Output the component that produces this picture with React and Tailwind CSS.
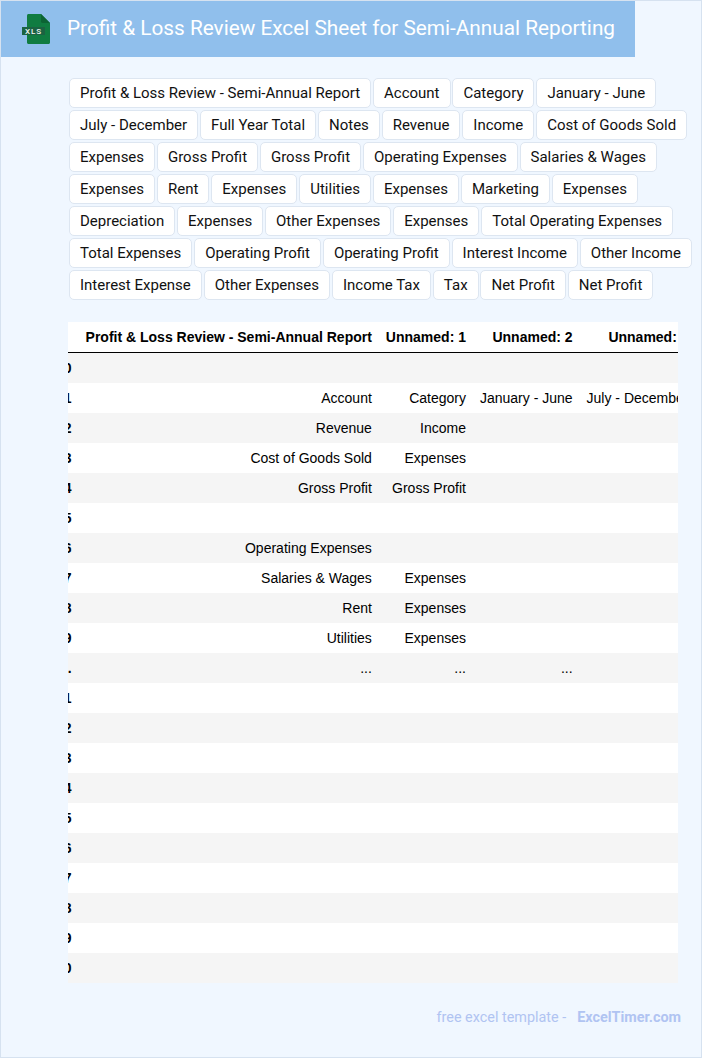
const tags = [
  "Profit & Loss Review - Semi-Annual Report", "Account", "Category", "January - June",
  "July - December", "Full Year Total", "Notes", "Revenue", "Income", "Cost of Goods Sold",
  "Expenses", "Gross Profit", "Gross Profit", "Operating Expenses", "Salaries & Wages",
  "Expenses", "Rent", "Expenses", "Utilities", "Expenses", "Marketing", "Expenses",
  "Depreciation", "Expenses", "Other Expenses", "Expenses", "Total Operating Expenses",
  "Total Expenses", "Operating Profit", "Operating Profit", "Interest Income", "Other Income",
  "Interest Expense", "Other Expenses", "Income Tax", "Tax", "Net Profit", "Net Profit",
];

const rows = [
  ["0", "", "", "", ""],
  ["1", "Account", "Category", "January - June", "July - December"],
  ["2", "Revenue", "Income", "", ""],
  ["3", "Cost of Goods Sold", "Expenses", "", ""],
  ["4", "Gross Profit", "Gross Profit", "", ""],
  ["5", "", "", "", ""],
  ["6", "Operating Expenses", "", "", ""],
  ["7", "Salaries & Wages", "Expenses", "", ""],
  ["8", "Rent", "Expenses", "", ""],
  ["9", "Utilities", "Expenses", "", ""],
  ["...", "...", "...", "...", ""],
  ["11", "", "", "", ""],
  ["12", "", "", "", ""],
  ["13", "", "", "", ""],
  ["14", "", "", "", ""],
  ["15", "", "", "", ""],
  ["16", "", "", "", ""],
  ["17", "", "", "", ""],
  ["18", "", "", "", ""],
  ["19", "", "", "", ""],
  ["20", "", "", "", ""],
];

function XlsIcon() {
  return (
    <svg width="28" height="30" viewBox="0 0 28 30" className="shrink-0">
      <path d="M5 1.5C5 0.7 5.7 0 6.5 0H19L28 9V28.5C28 29.3 27.3 30 26.5 30H6.5C5.7 30 5 29.3 5 28.5Z" fill="#107c41" />
      <path d="M19 0L28 9H20.5C19.7 9 19 8.3 19 7.5Z" fill="#0c6434" />
      <rect x="0" y="13" width="23" height="8" fill="#1b6342" />
      <text x="11.5" y="20" textAnchor="middle" fill="#f2f7f4" fontSize="8" fontWeight="500" letterSpacing="1" fontFamily="Roboto, sans-serif">XLS</text>
    </svg>
  );
}

export default function App() {
  return (
    <div className="h-[1058px] w-[702px] overflow-hidden border border-[#d6e2f0] bg-[#f0f7ff] font-['Roboto',sans-serif]">
      <div className="flex h-14 w-[634px] items-center gap-[17px] bg-[#90bfec] pl-[21px]">
        <XlsIcon />
        <h1 className="whitespace-nowrap text-[20.77px] font-normal text-white">
          Profit & Loss Review Excel Sheet for Semi-Annual Reporting
        </h1>
      </div>

      <div className="mt-[21px] flex flex-wrap gap-x-[1.9px] gap-y-[2px] pl-[68px]">
        {tags.map((tag, i) => (
          <span
            key={i}
            className="h-[30px] rounded-[5px] border border-[#dde6f1] bg-white px-[10px] text-[15px] leading-[28px] whitespace-nowrap text-[#111]"
          >
            {tag}
          </span>
        ))}
      </div>

      <div className="mt-[22px] ml-[67px] w-[610px] overflow-hidden font-['Liberation_Sans',sans-serif] text-[14px] text-black">
        <table className="-ml-[19px] border-separate border-spacing-0 whitespace-nowrap">
          <thead>
            <tr className="h-[31px] bg-white">
              <th className="w-[30px] border-b border-black px-[7px]"></th>
              <th className="border-b border-black px-[7px] text-right font-bold">Profit & Loss Review - Semi-Annual Report</th>
              <th className="border-b border-black px-[7px] text-right font-bold">Unnamed: 1</th>
              <th className="border-b border-black px-[7px] text-right font-bold">Unnamed: 2</th>
              <th className="border-b border-black px-[7px] text-right font-bold">Unnamed: 3</th>
            </tr>
          </thead>
          <tbody>
            {rows.map((row, i) => (
              <tr key={i} className={i % 2 === 0 ? "h-[30px] bg-[#f5f5f5]" : "h-[30px] bg-white"}>
                <th className="px-[7px] text-right font-bold">{row[0]}</th>
                <td className="px-[7px] text-right">{row[1]}</td>
                <td className="px-[7px] text-right">{row[2]}</td>
                <td className="px-[7px] text-right">{row[3]}</td>
                <td className="px-[7px] text-right">{row[4]}</td>
              </tr>
            ))}
          </tbody>
        </table>
      </div>

      <div className="mt-[24px] flex w-[680px] justify-end gap-[11px] text-[14.4px] text-[#b0c4f2]">
        <span>free excel template -</span>
        <span className="font-bold">ExcelTimer.com</span>
      </div>
    </div>
  );
}
